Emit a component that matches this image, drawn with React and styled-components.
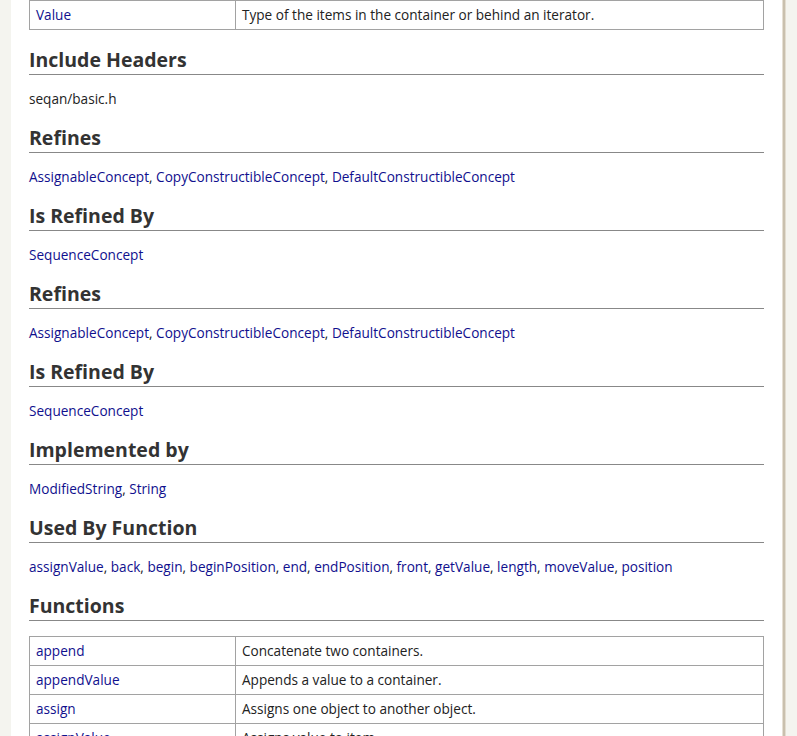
import React from "react";
import styled, { createGlobalStyle } from "styled-components";

const GlobalStyle = createGlobalStyle`
  html, body {
    margin: 0;
    padding: 0;
    background: #f4f4ef;
  }
  body {
    font-family: "Open Sans", "DejaVu Sans", sans-serif;
    color: #222;
  }
`;

const Page = styled.div`
  display: flex;
  min-height: 100vh;
`;

const Gutter = styled.div`
  width: 11px;
  flex: none;
  background: #f4f4ef;
`;

const Content = styled.div`
  width: 735px;
  flex: none;
  background: #fff;
  padding: 0 18px 40px 18px;
  border-right: 1px solid #e6e0d4;
  box-shadow: 1px 0 0 #c9c0ae, 2px 0 0 #c9c0ae, 3px 0 0 #e3ddd0;
`;

const Heading = styled.h2`
  margin: 18px 0 0 0;
  padding: 0 0 2px 0;
  font-size: 19.5px;
  line-height: 24px;
  font-weight: 700;
  color: #333;
  border-bottom: 1px solid #888;
`;

const Para = styled.p`
  margin: 15px 0 0 0;
  font-size: 13.6px;
  line-height: 18px;
  color: #222;
`;

const A = styled.a`
  color: #10108e;
  text-decoration: none;
`;

const Table = styled.table`
  width: 100%;
  border-collapse: collapse;
  margin: ${(p) => (p.$first ? "0 0 3px 0" : "15px 0 0 0")};
  font-size: 13.6px;
  line-height: 18px;
`;

const Td = styled.td`
  border: 1px solid #a2a2a2;
  padding: 5px 6px;
  vertical-align: top;
  width: ${(p) => (p.$name ? "193px" : "auto")};
  color: #222;
`;

function LinkList({ items }) {
  return (
    <Para>
      {items.map((it, i) => (
        <React.Fragment key={it}>
          <A href="#">{it}</A>
          {i < items.length - 1 ? ", " : ""}
        </React.Fragment>
      ))}
    </Para>
  );
}

const refines = [
  "AssignableConcept",
  "CopyConstructibleConcept",
  "DefaultConstructibleConcept",
];

const usedBy = [
  "assignValue",
  "back",
  "begin",
  "beginPosition",
  "end",
  "endPosition",
  "front",
  "getValue",
  "length",
  "moveValue",
  "position",
];

const functions = [
  ["append", "Concatenate two containers."],
  ["appendValue", "Appends a value to a container."],
  ["assign", "Assigns one object to another object."],
  ["assignValue", "Assigns value to item."],
  ["back", "Returns a reference to the last item."],
  ["begin", "The begin of a container."],
];

export default function App() {
  return (
    <>
      <GlobalStyle />
      <Page>
        <Gutter />
        <Content>
          <Table $first>
            <tbody>
              <tr>
                <Td $name>
                  <A href="#">Value</A>
                </Td>
                <Td>Type of the items in the container or behind an iterator.</Td>
              </tr>
            </tbody>
          </Table>

          <Heading>Include Headers</Heading>
          <Para>seqan/basic.h</Para>

          <Heading>Refines</Heading>
          <LinkList items={refines} />

          <Heading>Is Refined By</Heading>
          <LinkList items={["SequenceConcept"]} />

          <Heading>Refines</Heading>
          <LinkList items={refines} />

          <Heading>Is Refined By</Heading>
          <LinkList items={["SequenceConcept"]} />

          <Heading>Implemented by</Heading>
          <LinkList items={["ModifiedString", "String"]} />

          <Heading>Used By Function</Heading>
          <LinkList items={usedBy} />

          <Heading>Functions</Heading>
          <Table>
            <tbody>
              {functions.map(([name, desc]) => (
                <tr key={name}>
                  <Td $name>
                    <A href="#">{name}</A>
                  </Td>
                  <Td>{desc}</Td>
                </tr>
              ))}
            </tbody>
          </Table>
        </Content>
      </Page>
    </>
  );
}
